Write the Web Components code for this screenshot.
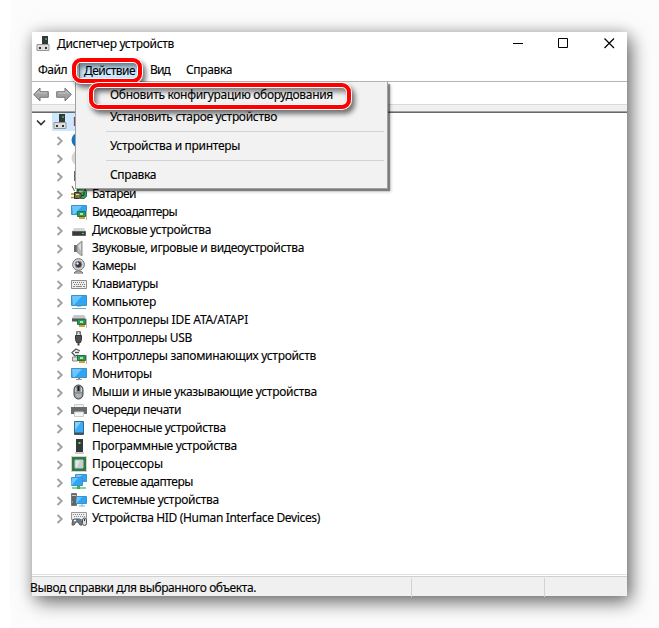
<!DOCTYPE html>
<html lang="ru"><head><meta charset="utf-8"><title>Диспетчер устройств</title>
<style>
body{margin:0;width:659px;height:628px;overflow:hidden;background:linear-gradient(90deg,#fff 10px,#fcfcfc 10px);font:12px/18px "Noto Sans","Open Sans",sans-serif;color:#000;-webkit-text-stroke:.12px #000}
</style></head><body>
<device-manager></device-manager>
<script>
class FitText extends HTMLElement{
  connectedCallback(){
    const r=this.attachShadow({mode:'open'});
    r.innerHTML='<style>:host{display:block;white-space:nowrap;flex:none}span{display:inline-block}</style><span></span>';
    const s=r.querySelector('span');s.textContent=this.getAttribute('text');
    const w=s.getBoundingClientRect().width,t=+this.getAttribute('w');
    if(t)s.style.letterSpacing=((t-w)/s.textContent.length)+'px';
  }
}
const card='<path d="M6.500 7.500h8v5h-8z" fill="#2c9b55" stroke="#1f7546"/><path d="M9 9h3v2H9z" fill="#b9dcc0"/><path d="M8 13h6v2H8z" fill="#e39b2d"/><path d="M15.500 7v9" stroke="#b5b5b5"/>';
const screen=(x,y,w,h)=>`<path d="M${x} ${y}h${w}v${h}h-${w}z" fill="#2fa5f5" stroke="#4590bf"/><path d="M${x+.5} ${y+.5}h${w-5}l-${h-2} ${h-1}h-${Math.max(1,w-h-4)}z" fill="#6cc6ff"/>`;
const ICONS={
 root:'<path d="M1 8.500h12v6H1z" fill="#dedede" stroke="#969696"/><path d="M6 0h6v8H6z" fill="#34383b"/><path d="M9 2h2v2H9z" fill="#3d9b50"/><path d="M3 11h2v2H3zM9 11h2v2H9z" fill="#333"/>',
 audio:'<circle cx="8" cy="8" r="7.500" fill="#1673c7"/>',
 disc:'<circle cx="8" cy="8" r="7.500" fill="#d5d5d5"/>',
 fw:'<path d="M3 3h8v10H3z" fill="#666"/>',
 battery:'<path d="M6 3.500q4-2 8-1l1.500 3v5q-2 3-6 2L6 9z" fill="#39a552" stroke="#247a38"/><path d="M8 4l5-1v2L8 7z" fill="#b2edb4"/><path d="M1 0l2.500 5" stroke="#484838"/><path d="M3.500 6.500h4q3 0 3 3t-3 3h-4z" fill="#77734a" stroke="#302f24"/><path d="M0 8h3M0 11.500h3" stroke="#b48a20" stroke-width="1.500"/><path d="M10 9.500h3V6" stroke="#234" /><path d="M5 8.500h3" stroke="#e8e2a0"/>',
 video:screen(.5,1.5,15,9)+card,
 disk:'<path d="M3 6h10l2 4H1z" fill="#d4d4d4"/><path d="M1.500 9.500h13v4h-13z" fill="#393c3e" stroke="#606060"/><path d="M11 11h2v1h-2z" fill="#38e45d"/>',
 sound:'<path d="M3 5h3v7H3z" fill="#6a6a6a"/><path d="M6 5l5-4v15l-5-4z" fill="#b9b9b9" stroke="#8d8d8d"/><path d="M7 6l3-3v8z" fill="#ddd"/>',
 camera:'<circle cx="7.500" cy="6.500" r="5.800" fill="#ddd" stroke="#666"/><circle cx="7.500" cy="6.500" r="3.400" fill="#343a40" stroke="#909090"/><circle cx="6.500" cy="5.500" r="1.200" fill="#dbeafa"/><path d="M3 15q1-2 4.500-2T12 15z" fill="#ddd" stroke="#666"/>',
 keyboard:'<path d="M.5 4.500h15v8H.5z" fill="#eee" stroke="#8e8e8e"/><path d="M2 6.500h12M3 8.500h11" stroke="#777" stroke-dasharray="1 1" stroke-linecap="butt"/><path d="M2 10.500h2m1 0h6m1 0h2" stroke="#888" stroke-linecap="butt"/>',
 computer:screen(.5,1.5,15,10)+'<path d="M6 12h4v1H6z" fill="#9ac4dc"/><path d="M1 14.500h14" stroke="#75add0"/>',
 ide:'<path d="M1 6l2-3h10l2 3v3H1z" fill="#c8c8c8"/><path d="M1 6.500h13v3H1z" fill="#555"/>'+card,
 usb:'<path d="M5.500 1.500h4v4h-4z" fill="#ddd" stroke="#777"/><path d="M6 3h1m1 0h1" stroke="#555"/><path d="M4.500 5.500h6v4l-1 3h-4l-1-3z" fill="#505050" stroke="#333"/><path d="M7.500 12v3.500" stroke="#444" stroke-width="2"/>',
 storage:'<path d="M7 7L4 8 1 4.500 5 1l4 2M4 4.500h4" fill="none" stroke="#555" stroke-width="1.300"/><path d="M1.500 9h5v4h-5z" fill="#ddd" stroke="#888"/>'+card,
 monitor:screen(.5,2.5,15,9)+'<path d="M7 12h2v1H7z" fill="#888"/><path d="M5 13.500h6" stroke="#999"/>',
 mouse:'<rect x="3" y="1" width="9" height="14" rx="4.500" fill="#8b8f94" stroke="#44484b"/><path d="M4.500 9q3 2 6 0v3q-1 2-3 2t-3-2z" fill="#aeb2b7"/><path d="M4.800 4v4m5.500-4v4" stroke="#ddd"/><path d="M7.500 2v5" stroke="#191b1d" stroke-width="2"/>',
 printer:'<path d="M3.500 2.500h9v3h-9z" fill="#f1f1f1" stroke="#ccc"/><path d="M0 5h16v7H0z" fill="#666b6e"/><path d="M3.500 10h9v4.500h-9z" fill="#f6f6f6" stroke="#ccc"/>',
 portable:'<path d="M3.500 1.500h9v13h-9z" fill="#3baaf7" stroke="#3c6a85"/><path d="M4 2h6L4 10z" fill="#80d1ff"/><path d="M3.500 12.500h9v2h-9z" fill="#40505a"/>',
 software:'<path d="M5 1h7v13H5z" fill="#34383b"/><path d="M7.500 4h2v2h-2z" fill="#43e865"/><path d="M4 15h9" stroke="#999"/>',
 cpu:'<path d="M.5.5h15v15H.5z" stroke="#b5a76c" stroke-dasharray="1 1" stroke-linecap="butt"/><path d="M1 1h14v14H1z" fill="#2f7951"/><path d="M4 4h8v8H4z" fill="#e4e8e6" stroke="#b4c9bd"/><path d="M9 4h3v8H6z" fill="#c8d0cc"/>',
 network:screen(4.5,.5,11,7)+screen(.5,3.5,11,8)+'<path d="M1 14h14" stroke="#83d39d" stroke-width="2"/><path d="M6 12h3v3H6z" fill="#36b065"/>',
 system:'<path d="M.5 1.500h5v12h-5z" fill="#5e656a" stroke="#777"/><path d="M1 3.500h4" stroke="#ccc"/><path d="M1 10h1" stroke="#4f6"/>'+screen(5.5,4.5,10,7)+'<path d="M8 14h6M11 12v2" stroke="#78b0d3"/>',
 hid:'<path d="M.5 2.500h15v7H.5z" fill="#eee" stroke="#999"/><path d="M2 4.500h12M3 6.500h11" stroke="#888" stroke-dasharray="1 1" stroke-linecap="butt"/><path d="M1 15q0-6 2-6h5q3 0 3 6H9l-2-3H5l-2 3z" fill="#777e84" stroke="#50565b"/><path d="M3 10.500h2M4 9.500v2" stroke="#fff"/><circle cx="8.500" cy="10.500" r="1.200" fill="#2f89c8"/><rect x="11.500" y="8" width="4" height="7.500" rx="2" fill="#ddd" stroke="#555"/><path d="M13.500 9v2" stroke="#333"/>'
};
class DeviceIcon extends HTMLElement{
  connectedCallback(){this.attachShadow({mode:'open'}).innerHTML=`<style>:host{display:block;width:16px;height:16px;flex:none}svg{display:block}</style><svg width="16" height="16" viewBox="0 0 16 16" fill="none">${ICONS[this.getAttribute('name')]}</svg>`}
}
class TreeRow extends HTMLElement{
  connectedCallback(){this.attachShadow({mode:'open'}).innerHTML=`<style>:host{display:flex;height:18px;padding-left:24px;align-items:flex-start}svg{width:8px;height:10px;margin:5px 7px 0 0;flex:none}device-icon{margin:1px 5px 0 0}</style><svg viewBox="0 0 8 10" fill="none" stroke="#a2a2a2" stroke-width="1.900"><path d="M1.500 1l4.200 4-4.200 4"/></svg><device-icon name="${this.getAttribute('icon')}"></device-icon><fit-text text="${this.getAttribute('text')}" w="${this.getAttribute('w')}"></fit-text>`}
}
class MenuItem extends HTMLElement{
  connectedCallback(){this.attachShadow({mode:'open'}).innerHTML=`<style>:host{display:block;box-sizing:border-box;height:22px;line-height:22px;padding:0 0 0 34px}</style><slot></slot>`}
}
class CallOut extends HTMLElement{
  connectedCallback(){this.attachShadow({mode:'open'}).innerHTML=`<style>:host{position:absolute;box-sizing:border-box;border:4px solid #fe0000;border-radius:9px;box-shadow:0 0 0 1px #fff,3px 4px 5px 1px #0008,inset 0 0 0 1px #fff,inset 3px 4px 5px 1px #0007;pointer-events:none}</style>`}
}
class DeviceManager extends HTMLElement{
  connectedCallback(){
    const rows=[['audio','',0],['disc','',0],['fw','',0],['battery','Батареи',44],['video','Видеоадаптеры',85],['disk','Дисковые устройства',119],['sound','Звуковые, игровые и видеоустройства',212],['camera','Камеры',44],['keyboard','Клавиатуры',66],['computer','Компьютер',64],['ide','Контроллеры IDE ATA/ATAPI',156],['usb','Контроллеры USB',100],['storage','Контроллеры запоминающих устройств',224],['monitor','Мониторы',60],['mouse','Мыши и иные указывающие устройства',225],['printer','Очереди печати',89],['portable','Переносные устройства',134],['software','Программные устройства',145],['cpu','Процессоры',71],['network','Сетевые адаптеры',101],['system','Системные устройства',127],['hid','Устройства HID (Human Interface Devices)',228]];
    const arrow='<path d="M.7 7.500L7 1v3.700h8.300v5.600H7V14z" fill="#a2a2a2" stroke="#777"/><path d="M3 7l3-3v2h8" stroke="#c8c8c8" fill="none"/>';
    this.attachShadow({mode:'open'}).innerHTML=`<style>
:host{display:block;padding:32px 0 0 32px}
.win{position:relative;width:595px;height:564px;background:#fff;box-shadow:4px 6px 18px 0 #00000090,0 0 12px #0002;display:flex;flex-direction:column}
.title{height:27px;display:flex;align-items:center;padding:0 12px 4px 4px;box-sizing:border-box}
.title device-icon{margin-right:5px}
.title .ctl{margin-left:auto;display:flex;gap:35px}.ctl svg{width:11px;height:11px;display:block}
.menu{height:22px;display:flex;align-items:flex-start;padding-left:6px;line-height:22px;border-bottom:1px solid #b4b4b4}
.action{background:#cce8ff;margin:2px 11px 0 12px;width:51px;padding:0 3px 0 4px;height:19px;border:1px solid #8e9ba5;border-radius:3px}
.menu .help{margin-left:16px}
.tools{height:23px;padding:5px 1px 0;box-sizing:border-box;display:flex;gap:7px;border-bottom:1px solid #d9d9d9}
.tools svg{width:16px;height:15px}
.band{height:6px;background:#f0f0f0;border-bottom:1px solid #a0a0a0}
.tree{flex:1;border-top:1px solid #696969}
.root{height:18px;display:flex;align-items:center;padding-left:4px}
.root>svg{width:10px;height:8px;margin:2px 6px 0 0}
.sel{background:#cce8ff;height:18px;display:flex;align-items:center;width:90px}
.sel fit-text{margin-left:4px;color:#7c1473}.sel device-icon{margin-left:1px}
.status{height:20px;border-top:1px solid #d0d0d0;background:#f0f0f0;display:grid;grid-template-columns:378px 132px 1fr;gap:1px;box-sizing:border-box;margin-top:1px}
.rule{height:1px;background:#e1e1e1}
.status div+div{border-left:1px solid #d2d2d2;margin-top:1px}
.status fit-text{margin:2px 0 0 -2px;line-height:18px}
.pop{position:absolute;left:43px;top:50px;width:313px;height:107px;background:#f2f2f2;border:solid #a0a0a0;border-width:0 1px 1px;box-sizing:border-box;box-shadow:2px 2px 1px #0006,3px 3px 3px #0003;padding-top:2px}
.pop hr{margin:3px 3px 3px 30px;border:0;border-top:1px solid #d3d3d3;height:0}
.c1{left:40px;top:26px;width:70px;height:25px}.c2{left:57px;top:51px;width:262px;height:26px}
.act{position:absolute;left:52px;top:30px}
</style>
<div class="win">
<div class="title"><device-icon name="root"></device-icon><fit-text text="Диспетчер устройств" w="117"></fit-text><div class="ctl"><svg viewBox="0 0 11 11"><path d="M1 5.500h10" stroke="#000"/></svg><svg viewBox="0 0 11 11"><path d="M.5.5h9v9h-9z" fill="none" stroke="#000"/></svg><svg viewBox="0 0 11 11"><path d="M.5.5l9.500 9.500m0-9.500l-9.500 9.500" stroke="#000" stroke-width="1.200"/></svg></div></div>
<div class="menu"><fit-text text="Файл" w="29"></fit-text><div class="action"></div><fit-text text="Вид" w="20"></fit-text><fit-text class="help" text="Справка" w="46"></fit-text></div>
<div class="tools"><svg viewBox="0 0 16 15">${arrow}</svg><svg viewBox="0 0 16 15"><g transform="matrix(-1 0 0 1 16 0)">${arrow}</g></svg></div>
<div class="band"></div>
<div class="tree"><div class="root"><svg viewBox="0 0 10 8"><path d="M1 1.500l4 4 4-4" fill="none" stroke="#333" stroke-width="1.700"/></svg><div class="sel"><device-icon name="root"></device-icon><fit-text text="P"></fit-text></div></div>
<div class="sub">${rows.map(r=>`<tree-row icon="${r[0]}" text="${r[1]}" w="${r[2]}"></tree-row>`).join('')}</div></div>
<div class="rule"></div>
<div class="status"><div><fit-text text="Вывод справки для выбранного объекта." w="226"></fit-text></div><div></div><div></div></div>
<div class="pop"><menu-item><fit-text text="Обновить конфигурацию оборудования" w="223"></fit-text></menu-item><menu-item><fit-text text="Установить старое устройство" w="167"></fit-text></menu-item><hr><menu-item><fit-text text="Устройства и принтеры" w="130"></fit-text></menu-item><hr><menu-item><fit-text text="Справка" w="46"></fit-text></menu-item></div>
<call-out class="c1"></call-out><call-out class="c2"></call-out>
<fit-text class="act" text="Действие" w="51"></fit-text>
</div>`;
  }
}
customElements.define('fit-text',FitText);customElements.define('device-icon',DeviceIcon);customElements.define('tree-row',TreeRow);customElements.define('menu-item',MenuItem);customElements.define('call-out',CallOut);customElements.define('device-manager',DeviceManager);
</script></body></html>
